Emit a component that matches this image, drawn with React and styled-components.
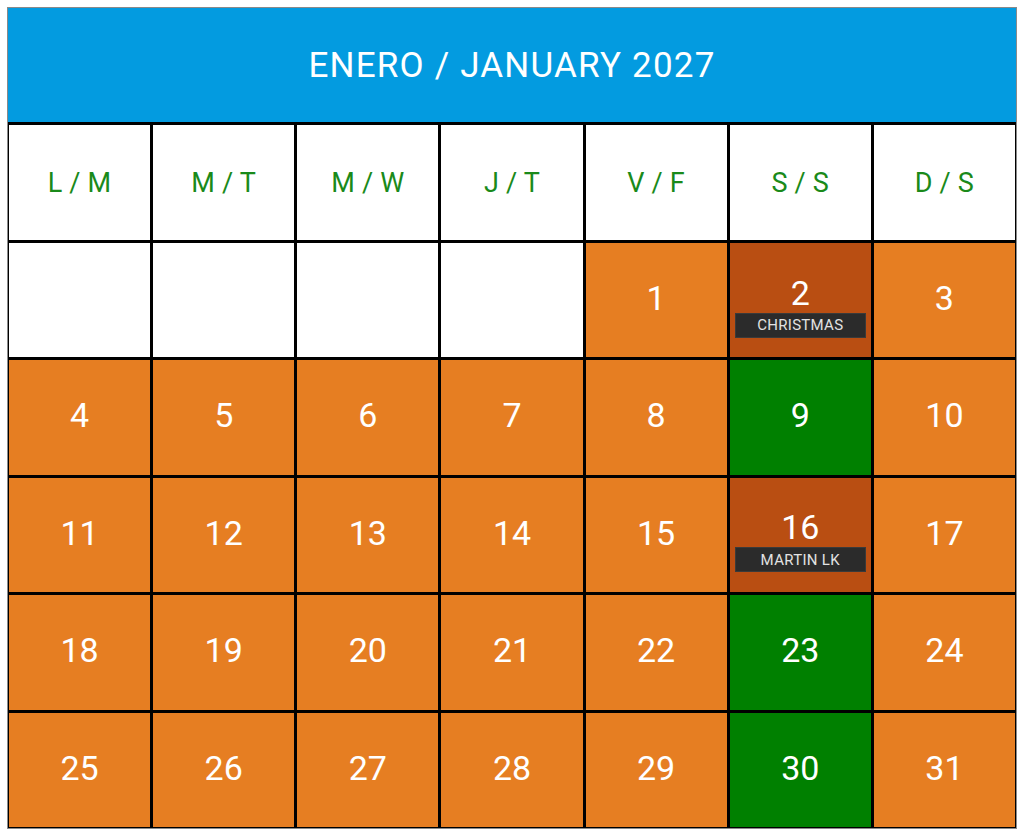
import React from "react";
import styled, { createGlobalStyle } from "styled-components";

const Global = createGlobalStyle`
  html, body { margin: 0; padding: 0; background: #fff; }
  body { font-family: Roboto, "Noto Sans", "Liberation Sans", sans-serif; }
`;

const Page = styled.div`
  padding: 7px;
`;

const Frame = styled.div`
  width: 1010px;
  height: 822px;
  box-sizing: border-box;
  border: 1px solid #8a8a8a;
`;

const Grid = styled.div`
  display: grid;
  grid-template-columns: repeat(7, 1fr);
  grid-template-rows: repeat(7, 1fr);
  gap: 3px;
  height: 100%;
  box-sizing: border-box;
  padding: 0 1px 1px 1px;
  background: #000;
`;

const Title = styled.div`
  grid-column: 1 / -1;
  margin: 0 -1px;
  background: #039be0;
  color: #fff;
  display: flex;
  align-items: center;
  justify-content: center;
  font-size: 35px;
  letter-spacing: 1.2px;
`;

const WeekDay = styled.div`
  background: #fff;
  color: #1a8a1a;
  display: flex;
  align-items: center;
  justify-content: center;
  font-size: 27px;
  letter-spacing: 0.2px;
  white-space: pre;
`;

const bg = {
  empty: "#ffffff",
  normal: "#e67e22",
  holiday: "#b94e12",
  sunday: "#008000",
};

const Day = styled.div`
  background: ${(p) => bg[p.$kind]};
  color: #fff;
  display: flex;
  flex-direction: column;
  align-items: center;
  justify-content: center;
  padding: ${(p) => (p.$withLabel ? "10px 5px 0" : "0 5px 4px")};
`;

const Num = styled.div`
  font-size: 34px;
  line-height: 40px;
`;

const Label = styled.div`
  align-self: stretch;
  height: 25px;
  background: #2b2b2b;
  border: 1px solid #3a3a3a;
  box-sizing: border-box;
  color: #e2e2e2;
  font-size: 15px;
  display: flex;
  align-items: center;
  justify-content: center;
  letter-spacing: 0.3px;
`;

const days = ["L / M", "M / T", "M / W", "J / T", "V / F", "S / S", "D / S"];
const labels = { 2: "CHRISTMAS", 16: "MARTIN LK" };
const greens = new Set([9, 23, 30]);

export default function App() {
  const cells = [];
  for (let i = 0; i < 4; i++) cells.push({ key: "e" + i, kind: "empty" });
  for (let d = 1; d <= 31; d++) {
    let kind = "normal";
    if (labels[d]) kind = "holiday";
    else if (greens.has(d)) kind = "sunday";
    cells.push({ key: "d" + d, kind, d, label: labels[d] });
  }
  return (
    <Page>
      <Global />
      <Frame>
        <Grid>
          <Title>ENERO / JANUARY 2027</Title>
          {days.map((w) => (
            <WeekDay key={w}>{w}</WeekDay>
          ))}
          {cells.map((c) => (
            <Day key={c.key} $kind={c.kind} $withLabel={!!c.label}>
              {c.d && <Num>{c.d}</Num>}
              {c.label && <Label>{c.label}</Label>}
            </Day>
          ))}
        </Grid>
      </Frame>
    </Page>
  );
}
